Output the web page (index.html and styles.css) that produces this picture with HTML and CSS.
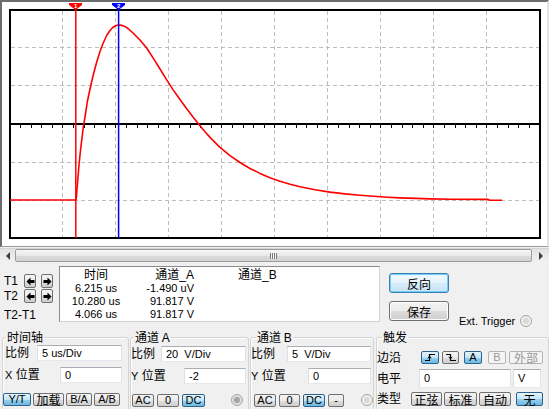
FILE: index.html
```html
<!DOCTYPE html>
<html lang="zh">
<head>
<meta charset="utf-8">
<title>Oscilloscope</title>
<link rel="stylesheet" href="styles.css">
</head>
<body>
<div class="screen">
  <svg class="plot" width="545" height="244" viewBox="2 2 545 244" xmlns="http://www.w3.org/2000/svg">
    <rect x="2" y="2" width="545" height="244" fill="#fff"/>
    <g stroke="#bdbdbd" stroke-width="1" stroke-dasharray="4 3" fill="none">
      <path d="M62.5 11V237M115.5 11V237M168.5 11V237M221.5 11V237M274.5 11V237M327.5 11V237M380.5 11V237M433.5 11V237M486.5 11V237"/>
      <path d="M11 47.5H539M11 85.5H539M11 162.5H539M11 200.5H539"/>
    </g>
    <path d="M10 124H540" stroke="#000" stroke-width="2"/>
    <path stroke="#000" stroke-width="1" d="M20.5 125v3M31.5 125v3M41.5 125v3M52.5 125v3M62.5 125v3M73.5 125v3M84.5 125v3M94.5 125v3M105.5 125v3M115.5 125v3M126.5 125v3M137.5 125v3M147.5 125v3M158.5 125v3M168.5 125v3M179.5 125v3M190.5 125v3M200.5 125v3M211.5 125v3M221.5 125v3M232.5 125v3M243.5 125v3M253.5 125v3M264.5 125v3M274.5 125v3M285.5 125v3M296.5 125v3M306.5 125v3M317.5 125v3M327.5 125v3M338.5 125v3M349.5 125v3M359.5 125v3M370.5 125v3M380.5 125v3M391.5 125v3M402.5 125v3M412.5 125v3M423.5 125v3M433.5 125v3M444.5 125v3M455.5 125v3M465.5 125v3M476.5 125v3M486.5 125v3M497.5 125v3M508.5 125v3M518.5 125v3M529.5 125v3"/>
    <rect x="10" y="10" width="530" height="228" fill="none" stroke="#000" stroke-width="2"/>
    <polyline fill="none" stroke="#ff0000" stroke-width="1.6" stroke-linejoin="round" points="10,200 76,200 76.5,196 77,189 78,177 79,165 80,155 81,146 82,138 83.3,127 85,117 87.3,102 90,89 93,76 96.7,62 100,51.5 103,43.5 106.7,35.5 110,30.5 113,27.3 116,25.5 119,25 122,25.4 125,26.6 128,28.5 133,33 140,40 146.7,48 155,60.9 160,69 166.7,79.9 173,89.6 180,99.5 186,107.8 193,117 199,124.5 205,131.8 210,137.4 220,147.4 230,155.6 240,162.5 250,168.5 260,173.4 270,177.7 280,181.2 290,184.2 300,186.7 315,189.7 330,192.1 345,193.9 360,195.3 380,196.8 388,197.3 400,197.9 416,198.4 430,198.9 450,199.2 488,199.4 490,200.2 502,200.2"/>
    <path d="M75.8 9V238" stroke="#ff0000" stroke-width="1.5"/>
    <path d="M118.6 9V238" stroke="#0000ff" stroke-width="1.5"/>
    <polygon points="69,3 82,3 82,5 75.6,10 69,5" fill="#ff0000"/>
    <text x="75.6" y="8" font-family="Liberation Sans, sans-serif" font-size="6" font-weight="bold" fill="#fff" text-anchor="middle">1</text>
    <polygon points="112,3 125,3 125,5 118.6,10 112,5" fill="#0000ff"/>
    <text x="118.6" y="8" font-family="Liberation Sans, sans-serif" font-size="6" font-weight="bold" fill="#fff" text-anchor="middle">2</text>
  </svg>
</div>

<div class="hscroll">
  <span class="sb-btn">
    <svg width="6" height="8" viewBox="0 0 6 8"><polygon points="5,0 5,8 1,4" fill="#3c3c3c"/></svg>
  </span>
  <div class="sb-thumb"><span class="grip"></span></div>
  <span class="sb-btn sb-right">
    <svg width="6" height="8" viewBox="0 0 6 8"><polygon points="1,0 1,8 5,4" fill="#3c3c3c"/></svg>
  </span>
</div>

<div class="panel">
  <div class="top-row">
    <div class="cursors">
      <div class="crow">
        <span class="clabel">T1</span>
        <span class="abtn"><svg width="9" height="9" viewBox="0 0 9 9"><polygon points="0.5,4.5 4.5,0.5 4.5,3 8.5,3 8.5,6 4.5,6 4.5,8.5" fill="#000"/></svg></span>
        <span class="abtn"><svg width="9" height="9" viewBox="0 0 9 9"><polygon points="8.5,4.5 4.5,0.5 4.5,3 0.5,3 0.5,6 4.5,6 4.5,8.5" fill="#000"/></svg></span>
      </div>
      <div class="crow">
        <span class="clabel">T2</span>
        <span class="abtn"><svg width="9" height="9" viewBox="0 0 9 9"><polygon points="0.5,4.5 4.5,0.5 4.5,3 8.5,3 8.5,6 4.5,6 4.5,8.5" fill="#000"/></svg></span>
        <span class="abtn"><svg width="9" height="9" viewBox="0 0 9 9"><polygon points="8.5,4.5 4.5,0.5 4.5,3 0.5,3 0.5,6 4.5,6 4.5,8.5" fill="#000"/></svg></span>
      </div>
      <div class="crow crow-diff">
        <span class="clabel">T2-T1</span>
      </div>
    </div>

    <div class="readout">
      <div class="hd c-time">时间</div>
      <div class="hd c-a">通道_A</div>
      <div class="hd c-b">通道_B</div>
      <div class="c-time">6.215 us</div>
      <div class="c-a">-1.490 uV</div>
      <div class="c-b"></div>
      <div class="c-time">10.280 us</div>
      <div class="c-a">91.817 V</div>
      <div class="c-b"></div>
      <div class="c-time">4.066 us</div>
      <div class="c-a">91.817 V</div>
      <div class="c-b"></div>
    </div>

    <div class="actions">
      <button class="pbtn pbtn-focus">反向</button>
      <div class="arow">
        <button class="pbtn">保存</button>
        <span class="ext">Ext. Trigger</span>
        <span class="radio radio-ext"></span>
      </div>
    </div>
  </div>

  <div class="groups">
    <fieldset class="grp g-time">
      <legend>时间轴</legend>
      <div class="frow r1"><span class="lbl w32">比例</span><span class="field w85">5 us/Div</span></div>
      <div class="frow r2"><span class="lbl w55"><span class="lat">X</span> 位置</span><span class="field w62">0</span></div>
      <div class="brow b-time">
        <span class="btn on w28">Y/T</span>
        <span class="btn cjk w31">加载</span>
        <span class="btn w26">B/A</span>
        <span class="btn w26">A/B</span>
      </div>
    </fieldset>

    <fieldset class="grp g-a">
      <legend>通道 <span class="lat12">A</span></legend>
      <div class="frow r1"><span class="lbl w30">比例</span><span class="field w85">20&nbsp; V/Div</span></div>
      <div class="frow r2"><span class="lbl w53"><span class="lat">Y</span> 位置</span><span class="field w62">-2</span></div>
      <div class="brow b-a">
        <span class="btn w22">AC</span>
        <span class="btn w22">0</span>
        <span class="btn on w23">DC</span>
        <span class="radio radio-dark ra"></span>
      </div>
    </fieldset>

    <fieldset class="grp g-b">
      <legend>通道 <span class="lat12">B</span></legend>
      <div class="frow r1"><span class="lbl w36">比例</span><span class="field w84">5&nbsp; V/Div</span></div>
      <div class="frow r2"><span class="lbl w57"><span class="lat">Y</span> 位置</span><span class="field w63">0</span></div>
      <div class="brow b-b">
        <span class="btn w22">AC</span>
        <span class="btn w21">0</span>
        <span class="btn on w22">DC</span>
        <span class="btn w16">-</span>
        <span class="radio rb"></span>
      </div>
    </fieldset>

    <fieldset class="grp g-trig">
      <legend>触发</legend>
      <div class="trow t1">
        <span class="lbl w44">边沿</span>
        <span class="btn on w18 icon"><svg width="12" height="9" viewBox="0 0 12 9"><path d="M1 7.5H5.5V1.5H11" fill="none" stroke="#000" stroke-width="1.2"/><path d="M3.8 5.2L5.5 3.2L7.2 5.2" fill="none" stroke="#000" stroke-width="1"/></svg></span>
        <span class="btn w17 icon g3"><svg width="12" height="9" viewBox="0 0 12 9"><path d="M1 1.5H5.5V7.5H11" fill="none" stroke="#000" stroke-width="1.2"/><path d="M3.8 3.8L5.5 5.8L7.2 3.8" fill="none" stroke="#000" stroke-width="1"/></svg></span>
        <span class="btn on w18 g5">A</span>
        <span class="btn off w18 g6">B</span>
        <span class="btn off cjk w34 g3">外部</span>
      </div>
      <div class="trow t2">
        <span class="lbl w42">电平</span>
        <span class="field tall w92">0</span>
        <span class="field tall w28 g2">V</span>
      </div>
      <div class="trow t3">
        <span class="lbl w34">类型</span>
        <span class="btn cjk tall14 w31">正弦</span>
        <span class="btn cjk tall14 w33 g2">标准</span>
        <span class="btn cjk tall14 w32 g2">自动</span>
        <span class="btn on cjk tall14 w27 g5">无</span>
      </div>
    </fieldset>
  </div>
</div>
</body>
</html>
```

FILE: styles.css
```css
* { box-sizing: border-box; }

html, body {
  margin: 0;
  padding: 0;
}

body {
  width: 549px;
  height: 409px;
  overflow: hidden;
  background: #f0f0f0;
  font-family: "Liberation Sans", "Noto Sans CJK SC", sans-serif;
  font-size: 11px;
  color: #000;
}

/* ---------- scope screen ---------- */
.screen {
  width: 549px;
  height: 247px;
  border-top: 2px solid #6d6d6d;
  border-left: 2px solid #6d6d6d;
  border-right: 2px solid #e4e4e4;
  border-bottom: 1px solid #9a9a9a;
  background: #fff;
}

.plot { display: block; }

/* ---------- horizontal scrollbar ---------- */
.hscroll {
  display: flex;
  height: 14px;
  margin-top: 1px;
  background: linear-gradient(#e2e2e2, #f1f1f1);
  border-top: 1px solid #d4d4d4;
}

.sb-btn {
  width: 15px;
  display: flex;
  align-items: center;
  justify-content: center;
}

.sb-right { width: 17px; }

.sb-thumb {
  flex: 1;
  border: 1px solid #9b9b9b;
  border-radius: 2px;
  background: linear-gradient(#f7f7f7, #e8e8e8 50%, #dadada 51%, #d4d4d4);
  display: flex;
  align-items: center;
  justify-content: center;
}

.grip {
  width: 7px;
  height: 6px;
  background: repeating-linear-gradient(90deg, #7a7a7a 0 1px, #f4f4f4 1px 2px);
}

/* ---------- lower panel ---------- */
.panel { height: 147px; }

.top-row {
  display: flex;
  height: 68px;
}

.cursors {
  width: 59px;
  padding-top: 12px;
}

.crow {
  display: flex;
  align-items: center;
  height: 14px;
  margin-bottom: 1px;
}

.crow-diff { margin-top: 5px; }

.clabel {
  width: 24px;
  padding-left: 4px;
  font-size: 12px;
  line-height: 14px;
  white-space: nowrap;
}

.abtn {
  width: 12px;
  height: 14px;
  margin-right: 5px;
  border: 1px solid #707070;
  border-radius: 2px;
  background: linear-gradient(#f4f4f4, #ebebeb 50%, #dcdcdc 51%, #cfcfcf);
  display: flex;
  align-items: center;
  justify-content: center;
}

.readout {
  width: 321px;
  height: 56px;
  margin-top: 4px;
  background: #fff;
  border: 1px solid;
  border-color: #8a8a8a #d2d2d2 #d2d2d2 #8a8a8a;
  display: grid;
  grid-template-columns: 72px 62px 1fr;
  grid-template-rows: 15px 13px 13px 13px;
  font-size: 11px;
  line-height: 13px;
}

.readout .hd {
  font-size: 12px;
  line-height: 14px;
  padding-top: 1px;
}

.c-time { text-align: center; white-space: nowrap; }
.c-a { text-align: right; white-space: nowrap; }
.c-b { padding-left: 44px; white-space: nowrap; }

.actions {
  margin-left: 9px;
  padding-top: 11px;
}

.pbtn {
  display: block;
  width: 60px;
  height: 20px;
  padding: 0;
  margin: 0;
  border: 1px solid #707070;
  border-radius: 3px;
  background: linear-gradient(#f2f2f2, #ebebeb 50%, #dddddd 51%, #cfcfcf);
  box-shadow: inset 0 0 0 1px #fcfcfc;
  font-family: "Noto Sans CJK SC", sans-serif;
  font-size: 12px;
  line-height: 17px;
  color: #000;
}

.pbtn-focus {
  border-color: #3c7fb1;
  background: linear-gradient(#f0f8fd, #e5f3fb 50%, #d6ecf8 51%, #c9e4f5);
  box-shadow: inset 0 0 0 1px #6fd0fb;
}

.arow {
  display: flex;
  align-items: flex-end;
  margin-top: 8px;
}

.ext {
  margin-left: 10px;
  margin-bottom: -7px;
  font-size: 11px;
  line-height: 13px;
  white-space: nowrap;
}

.radio {
  display: inline-block;
  width: 12px;
  height: 12px;
  border-radius: 50%;
  border: 1px solid #a3a3a3;
  background: radial-gradient(circle, #d9d9d9 0 2.5px, #ececec 3.5px, #f9f9f9 6px);
  flex: none;
}

.radio-dark {
  background: radial-gradient(circle, #a4a4a4 0 2.5px, #d6d6d6 3.5px, #f2f2f2 6px);
}

.radio-ext {
  margin-left: 5px;
  margin-bottom: -6px;
}

/* ---------- group boxes ---------- */
.groups {
  display: flex;
  align-items: flex-start;
}

.grp {
  margin: 0;
  padding: 0;
  min-width: 0;
  height: 92px;
  border: 1px solid #d3d3d3;
  border-radius: 3px;
  box-shadow: inset 1px 1px 0 #fff;
}

.grp legend {
  padding: 0 1px;
  font-size: 12px;
  line-height: 14px;
  font-family: "Noto Sans CJK SC", sans-serif;
}

.lat12 { font-family: "Liberation Sans", sans-serif; font-size: 12px; }

.g-time { width: 127px; margin-left: 2px; padding-left: 2px; }
.g-time legend { margin-left: 1px; }
.g-a { width: 119px; margin-left: 1px; }
.g-a legend { margin-left: 3px; }
.g-b { width: 124px; margin-left: 1px; }
.g-b legend { margin-left: 5px; }
.g-trig { width: 173px; margin-left: 2px; }
.g-trig legend { margin-left: 5px; }

.frow {
  display: flex;
  align-items: center;
  height: 16px;
}

.r1 { margin-top: 1px; }
.r2 { margin-top: 6px; }

.lbl {
  flex: none;
  font-size: 12px;
  line-height: 16px;
  white-space: nowrap;
}

.lat { font-family: "Liberation Sans", sans-serif; font-size: 11px; }

.field {
  flex: none;
  height: 16px;
  padding-left: 4px;
  background: #fff;
  border: 1px solid;
  border-color: #abadb3 #e2e3ea #e3e9ef #dbdfe6;
  font-size: 11px;
  line-height: 14px;
  white-space: nowrap;
}

.field.tall { height: 19px; line-height: 17px; }

.brow {
  display: flex;
  align-items: flex-start;
  margin-top: 10px;
  height: 13px;
}

.b-time { margin-left: -2px; gap: 2px; }
.b-a { margin-left: 1px; gap: 3px; }
.b-b { margin-left: 3px; gap: 3px; }

.btn {
  flex: none;
  display: flex;
  align-items: center;
  justify-content: center;
  height: 13px;
  border: 1px solid #707070;
  border-radius: 2px;
  background: linear-gradient(#f3f3f3, #ebebeb 50%, #dddddd 51%, #d0d0d0);
  font-size: 11px;
  line-height: 11px;
  white-space: nowrap;
}

.btn.cjk { font-size: 12px; font-family: "Noto Sans CJK SC", sans-serif; }

.btn.on {
  border-color: #2c628b;
  background: linear-gradient(#e5f4fc, #c4e5f6 50%, #98d1ef 51%, #6db9e2);
}

.btn.off {
  border-color: #b2b6b9;
  background: #f4f4f4;
  color: #9a9a9a;
}

.btn.tall14 { height: 14px; }

.ra { margin-left: 23px; margin-top: 0; }
.rb { margin-left: 14px; }

/* trigger group */
.trow {
  display: flex;
  align-items: center;
}

.t1 { margin-top: 7px; height: 13px; }
.t2 { margin-top: 5px; height: 19px; }
.t3 { margin-top: 4px; height: 14px; }

.g2 { margin-left: 2px; }
.g3 { margin-left: 3px; }
.g5 { margin-left: 5px; }
.g6 { margin-left: 6px; }

/* widths */
.w16 { width: 16px; }
.w17 { width: 17px; }
.w18 { width: 18px; }
.w21 { width: 21px; }
.w22 { width: 22px; }
.w23 { width: 23px; }
.w26 { width: 26px; }
.w27 { width: 27px; }
.w28 { width: 28px; }
.w30 { width: 30px; }
.w31 { width: 31px; }
.w32 { width: 32px; }
.w33 { width: 33px; }
.w34 { width: 34px; }
.w36 { width: 36px; }
.w42 { width: 42px; }
.w44 { width: 44px; }
.w53 { width: 53px; }
.w55 { width: 55px; }
.w57 { width: 57px; }
.w62 { width: 62px; }
.w63 { width: 63px; }
.w84 { width: 84px; }
.w85 { width: 85px; }
.w92 { width: 92px; }
```
